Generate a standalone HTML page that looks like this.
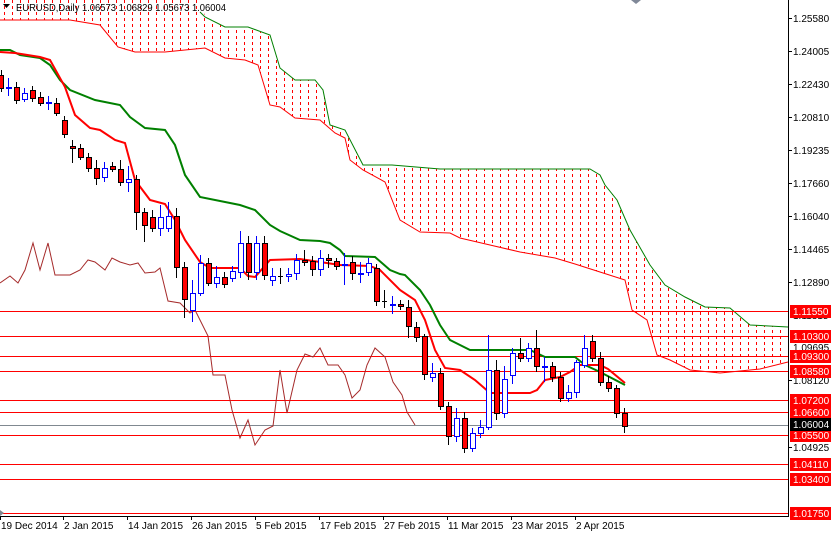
<!DOCTYPE html>
<html><head><meta charset="utf-8"><style>
html,body{margin:0;padding:0;background:#fff;}
svg{display:block;font-family:"Liberation Sans",sans-serif;}
</style></head><body>
<svg width="831" height="533" viewBox="0 0 831 533" xmlns="http://www.w3.org/2000/svg">
<defs>
<clipPath id="cl"><polygon points="0,-5 200,-5 205,17 225,27 248,27 270,35 280,68 295,80 315,80 323,90 330,125 345,130 363,165 392,165 440,169 590,169 600,175 605,185 617,200 630,230 650,265 665,285 685,297 705,307 730,308 750,325 788,327 788,362 760,369 720,373 690,370 670,360 657,355 647,320 632,310 625,280 600,272 575,264 555,258 520,252 490,245 460,238 450,233 420,232 400,220 385,182 363,170 350,160 345,138 335,133 320,120 295,118 280,107 270,105 258,65 245,60 225,58 205,48 185,50 165,52 135,52 118,47 100,25 70,20 0,20"/></clipPath>
<pattern id="hp" width="8" height="6" patternUnits="userSpaceOnUse"><rect x="4" y="0" width="1" height="3" fill="#f00"/></pattern>
</defs>
<rect x="0" y="0" width="788" height="516" fill="url(#hp)" clip-path="url(#cl)"/>
<polyline fill="none" stroke="#008000" stroke-width="1" points="200,12 205,17 225,27 248,27 270,35 280,68 295,80 315,80 323,90 330,125 345,130 363,165 392,165 440,169 590,169 600,175 605,185 617,200 630,230 650,265 665,285 685,297 705,307 730,308 750,325 788,327"/>
<polyline fill="none" stroke="#f00" stroke-width="1" points="788,362 760,369 720,373 690,370 670,360 657,355 647,320 632,310 625,280 600,272 575,264 555,258 520,252 490,245 460,238 450,233 420,232 400,220 385,182 363,170 350,160 345,138 335,133 320,120 295,118 280,107 270,105 258,65 245,60 225,58 205,48 185,50 165,52 135,52 118,47 100,25 70,20 0,20"/>
<g stroke="#f00" stroke-width="1">
<line x1="0" y1="311.5" x2="788" y2="311.5"/><line x1="0" y1="336.5" x2="788" y2="336.5"/><line x1="0" y1="356.5" x2="788" y2="356.5"/><line x1="0" y1="371.5" x2="788" y2="371.5"/><line x1="0" y1="400.5" x2="788" y2="400.5"/><line x1="0" y1="412.5" x2="788" y2="412.5"/><line x1="0" y1="435.5" x2="788" y2="435.5"/><line x1="0" y1="464.5" x2="788" y2="464.5"/><line x1="0" y1="479.5" x2="788" y2="479.5"/><line x1="0" y1="513.5" x2="788" y2="513.5"/>
</g>
<line x1="0" y1="425.5" x2="788" y2="425.5" stroke="#808890" stroke-width="1"/>
<polyline fill="none" stroke="#a52a2a" stroke-width="1" points="0,283 10,276 18,283 25,270 33,243 40,270 48,243 55,275 70,275 80,270 88,260 95,262 105,270 112,258 120,262 130,265 138,263 145,273 155,272 160,268 168,301 180,303 190,313 195,310 200,320 208,336 213,375 225,375 232,410 240,438 248,420 255,445 265,430 273,426 280,370 287,413 297,370 305,354 313,357 320,348 328,365 338,365 345,375 352,398 360,390 367,365 375,348 385,357 393,382 402,395 407,412 415,425"/>
<polyline fill="none" stroke="#008000" stroke-width="2" points="0,50 10,50 20,55 40,58 50,65 60,80 70,90 95,100 120,105 130,117 145,128 165,130 175,145 185,175 200,197 240,205 255,210 270,225 280,231 300,240 320,241 330,243 340,250 345,256 375,257 390,270 400,274 405,275 420,290 430,305 440,325 450,340 470,350 530,350 545,357 575,357 585,365 600,372 625,385"/>
<polyline fill="none" stroke="#f00" stroke-width="2" points="0,52 15,53 40,57 50,60 65,87 75,115 90,128 100,130 115,140 125,143 135,180 150,200 165,204 175,220 185,240 200,262 210,268 240,268 248,276 255,277 270,260 300,259 340,265 370,266 380,270 400,290 415,300 425,320 435,350 445,368 460,370 475,380 490,393 530,393 537,390 545,380 560,377 570,372 580,365 600,365 608,369 625,383"/>
<path fill="none" stroke="#000" stroke-width="1" d="M1.5,70V92 M16.5,82V104 M32.5,86V102 M40.5,92V106 M56.5,98V116 M64.5,116V138 M72.5,140V163 M80.5,144V160 M88.5,153V172 M96.5,160V185 M112.5,162V172 M120.5,160V186 M136.5,175V230 M144.5,208V242 M152.5,210V232 M176.5,208V278 M184.5,262V318 M208.5,258V286 M224.5,272V288 M248.5,236V280 M264.5,236V280 M280.5,268V284 M304.5,250V266 M312.5,256V276 M328.5,254V268 M336.5,258V270 M352.5,256V280 M376.5,264V306 M384.5,290V308 M400.5,300V310 M408.5,300V338 M416.5,322V342 M424.5,334V380 M440.5,368V410 M448.5,402V445 M464.5,412V453 M496.5,360V420 M520.5,338V362 M536.5,330V372 M552.5,362V382 M560.5,372V402 M592.5,335V362 M600.5,352V386 M608.5,376V392 M616.5,385V418 M624.5,408V433"/>
<path fill="none" stroke="#00f" stroke-width="1" d="M8.5,78V96 M24.5,88V102 M48.5,96V110 M104.5,162V182 M128.5,166V192 M160.5,205V236 M168.5,202V232 M192.5,280V322 M200.5,255V296 M216.5,266V288 M232.5,266V282 M240.5,231V278 M256.5,236V280 M272.5,268V286 M288.5,268V282 M296.5,254V280 M320.5,250V276 M344.5,253V285 M360.5,262V283 M368.5,258V276 M392.5,296V314 M432.5,363V382 M456.5,408V442 M472.5,428V452 M480.5,420V438 M488.5,335V430 M504.5,366V418 M512.5,348V384 M528.5,343V362 M544.5,357V382 M568.5,385V402 M576.5,360V398 M584.5,335V368"/>
<g fill="#f00" stroke="#000" stroke-width="1">
<rect x="-1.5" y="75.5" width="5" height="13"/><rect x="14.5" y="87.5" width="5" height="13"/><rect x="30.5" y="90.5" width="5" height="8"/><rect x="38.5" y="97.5" width="5" height="6"/><rect x="54.5" y="103.5" width="5" height="10"/><rect x="62.5" y="120.5" width="5" height="14"/><rect x="70.5" y="146.5" width="5" height="2"/><rect x="78.5" y="148.5" width="5" height="9"/><rect x="86.5" y="157.5" width="5" height="11"/><rect x="94.5" y="168.5" width="5" height="10"/><rect x="110.5" y="166.5" width="5" height="3"/><rect x="118.5" y="169.5" width="5" height="13"/><rect x="134.5" y="179.5" width="5" height="33"/><rect x="142.5" y="212.5" width="5" height="13"/><rect x="150.5" y="217.5" width="5" height="11"/><rect x="174.5" y="216.5" width="5" height="51"/><rect x="182.5" y="267.5" width="5" height="32"/><rect x="206.5" y="263.5" width="5" height="20"/><rect x="222.5" y="277.5" width="5" height="7"/><rect x="246.5" y="243.5" width="5" height="29"/><rect x="262.5" y="243.5" width="5" height="32"/><rect x="302.5" y="260.5" width="5" height="2"/><rect x="310.5" y="261.5" width="5" height="8"/><rect x="326.5" y="258.5" width="5" height="2"/><rect x="334.5" y="261.5" width="5" height="5"/><rect x="350.5" y="262.5" width="5" height="11"/><rect x="374.5" y="268.5" width="5" height="33"/><rect x="398.5" y="304.5" width="5" height="2"/><rect x="406.5" y="307.5" width="5" height="19"/><rect x="414.5" y="327.5" width="5" height="10"/><rect x="422.5" y="336.5" width="5" height="38"/><rect x="438.5" y="373.5" width="5" height="33"/><rect x="446.5" y="406.5" width="5" height="30"/><rect x="462.5" y="418.5" width="5" height="30"/><rect x="494.5" y="370.5" width="5" height="43"/><rect x="518.5" y="353.5" width="5" height="5"/><rect x="534.5" y="348.5" width="5" height="18"/><rect x="550.5" y="366.5" width="5" height="11"/><rect x="558.5" y="377.5" width="5" height="21"/><rect x="590.5" y="341.5" width="5" height="17"/><rect x="598.5" y="358.5" width="5" height="24"/><rect x="606.5" y="382.5" width="5" height="6"/><rect x="614.5" y="388.5" width="5" height="25"/><rect x="622.5" y="413.5" width="5" height="13"/>
</g>
<path stroke="#000" stroke-width="1" d="M278,276.5H283 M382,301.5H387"/>
<g fill="#fff" stroke="#00f" stroke-width="1">
<rect x="6.5" y="87.5" width="5" height="1"/><rect x="22.5" y="93.5" width="5" height="6"/><rect x="46.5" y="102.5" width="5" height="1"/><rect x="102.5" y="168.5" width="5" height="9"/><rect x="126.5" y="179.5" width="5" height="3"/><rect x="158.5" y="217.5" width="5" height="11"/><rect x="166.5" y="216.5" width="5" height="12"/><rect x="190.5" y="293.5" width="5" height="17"/><rect x="198.5" y="263.5" width="5" height="30"/><rect x="214.5" y="277.5" width="5" height="6"/><rect x="230.5" y="271.5" width="5" height="7"/><rect x="238.5" y="243.5" width="5" height="29"/><rect x="254.5" y="243.5" width="5" height="29"/><rect x="270.5" y="276.5" width="5" height="4"/><rect x="286.5" y="274.5" width="5" height="2"/><rect x="294.5" y="260.5" width="5" height="13"/><rect x="318.5" y="258.5" width="5" height="11"/><rect x="342.5" y="264.5" width="5" height="1"/><rect x="358.5" y="273.5" width="5" height="1"/><rect x="366.5" y="263.5" width="5" height="9"/><rect x="390.5" y="304.5" width="5" height="1"/><rect x="430.5" y="373.5" width="5" height="4"/><rect x="454.5" y="418.5" width="5" height="18"/><rect x="470.5" y="433.5" width="5" height="15"/><rect x="478.5" y="427.5" width="5" height="6"/><rect x="486.5" y="370.5" width="5" height="57"/><rect x="502.5" y="379.5" width="5" height="34"/><rect x="510.5" y="353.5" width="5" height="22"/><rect x="526.5" y="348.5" width="5" height="10"/><rect x="542.5" y="366.5" width="5" height="1"/><rect x="566.5" y="392.5" width="5" height="6"/><rect x="574.5" y="362.5" width="5" height="30"/><rect x="582.5" y="348.5" width="5" height="17"/>
</g>
<polygon points="3,4 10,4 6.5,8" fill="#000"/>
<text x="16" y="11" font-size="10" fill="#000" textLength="210" lengthAdjust="spacingAndGlyphs">EURUSD,Daily  1.06573 1.06829 1.05673 1.06004</text>
<polygon points="631,0 641,0 636,4" fill="#808898"/>
<line x1="788.5" y1="0" x2="788.5" y2="517" stroke="#000"/>
<line x1="0" y1="516.5" x2="789" y2="516.5" stroke="#000"/>
<g stroke="#000"><path d="M788,18.5h4M788,51.5h4M788,84.5h4M788,117.5h4M788,150.5h4M788,183.5h4M788,216.5h4M788,249.5h4M788,282.5h4M788,380.5h4M788,447.5h4"/>
<path d="M0.5,516v4M63.5,516v4M127.5,516v4M191.5,516v4M255.5,516v4M319.5,516v4M383.5,516v4M447.5,516v4M511.5,516v4M575.5,516v4"/></g>
<g font-size="10" fill="#000">
<text x="793" y="22">1.25580</text><text x="793" y="55">1.24005</text><text x="793" y="88">1.22430</text><text x="793" y="121">1.20810</text><text x="793" y="154">1.19235</text><text x="793" y="187">1.17660</text><text x="793" y="220">1.16040</text><text x="793" y="253">1.14465</text><text x="793" y="286">1.12890</text><text x="793" y="319">1.11315</text><text x="793" y="351">1.09695</text><text x="793" y="384">1.08120</text><text x="793" y="451">1.04925</text>
</g>
<g fill="#f00">
<rect x="790" y="305" width="41" height="13"/><rect x="790" y="330" width="41" height="13"/><rect x="790" y="350" width="41" height="13"/><rect x="790" y="365" width="41" height="13"/><rect x="790" y="394" width="41" height="13"/><rect x="790" y="406" width="41" height="13"/><rect x="790" y="429" width="41" height="13"/><rect x="790" y="458" width="41" height="13"/><rect x="790" y="473" width="41" height="13"/><rect x="790" y="507" width="41" height="13"/>
</g>
<rect x="790" y="418" width="41" height="13" fill="#000"/>
<g font-size="10" fill="#fff">
<text x="793" y="315">1.11550</text><text x="793" y="340">1.10300</text><text x="793" y="360">1.09300</text><text x="793" y="375">1.08580</text><text x="793" y="404">1.07200</text><text x="793" y="416">1.06600</text><text x="793" y="428">1.06004</text><text x="793" y="439">1.05500</text><text x="793" y="468">1.04110</text><text x="793" y="483">1.03400</text><text x="793" y="517">1.01750</text>
</g>
<g font-size="10" fill="#000">
<text x="1" y="529">19 Dec 2014</text><text x="64" y="529">2 Jan 2015</text><text x="128" y="529">14 Jan 2015</text><text x="192" y="529">26 Jan 2015</text><text x="256" y="529">5 Feb 2015</text><text x="320" y="529">17 Feb 2015</text><text x="384" y="529">27 Feb 2015</text><text x="448" y="529">11 Mar 2015</text><text x="512" y="529">23 Mar 2015</text><text x="576" y="529">2 Apr 2015</text>
</g>
<polygon points="0,510 4,513 0,516" fill="#808890"/>
</svg>
</body></html>
